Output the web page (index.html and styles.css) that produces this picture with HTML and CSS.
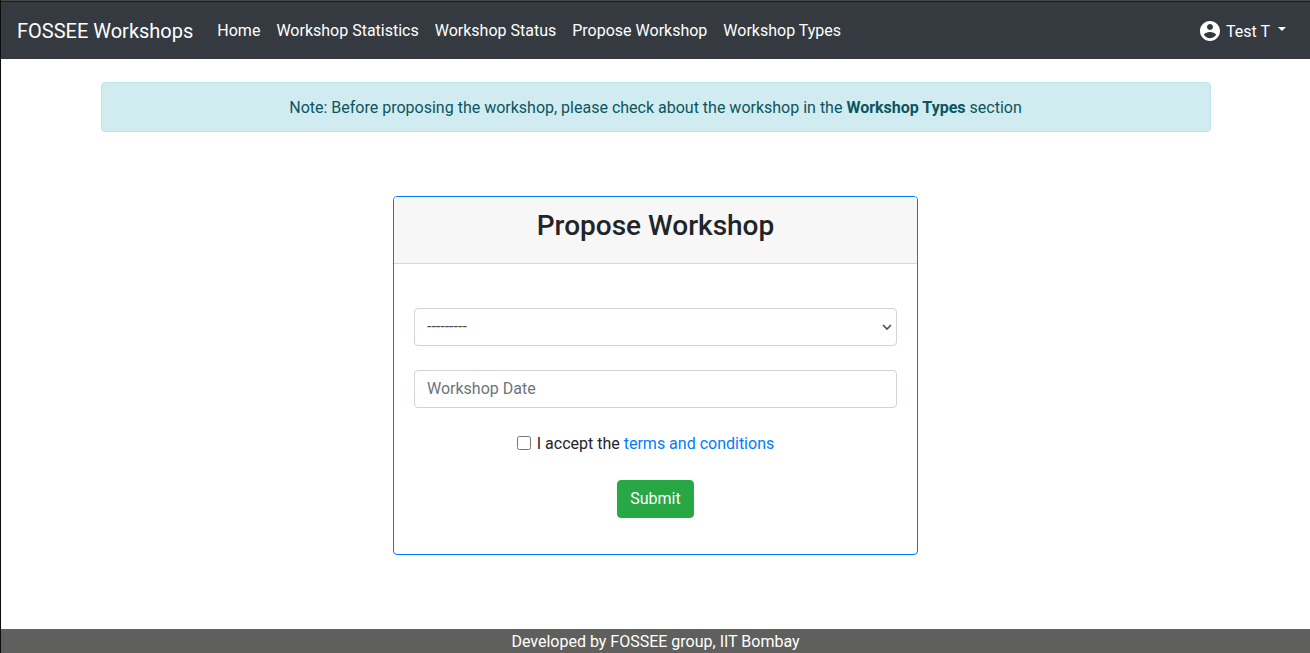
FILE: index.html
```html
<!DOCTYPE html>
<html lang="en">
<head>
<meta charset="utf-8">
<title>Propose Workshop</title>
<link rel="stylesheet" href="styles.css">
</head>
<body>
<header class="navbar">
  <a class="brand" href="#">FOSSEE Workshops</a>
  <nav class="nav-links">
    <a href="#">Home</a>
    <a href="#">Workshop Statistics</a>
    <a href="#">Workshop Status</a>
    <a href="#">Propose Workshop</a>
    <a href="#">Workshop Types</a>
  </nav>
  <button class="user-menu" type="button">
    <svg class="user-icon" viewBox="0 0 24 24" aria-hidden="true"><path fill="currentColor" d="M12 2C6.480 2 2 6.480 2 12s4.480 10 10 10 10-4.480 10-10S17.520 2 12 2zm0 3c1.660 0 3 1.340 3 3s-1.340 3-3 3-3-1.340-3-3 1.340-3 3-3zm0 14.200c-2.500 0-4.710-1.280-6-3.220.030-1.990 4-3.080 6-3.080 1.990 0 5.970 1.090 6 3.080-1.290 1.940-3.500 3.220-6 3.220z"/></svg>
    <span class="user-name">Test T</span>
    <span class="caret"></span>
  </button>
</header>
<main class="content">
  <p class="note">Note: Before proposing the workshop, please check about the workshop in the <b>Workshop Types</b> section</p>
  <section class="card">
    <div class="card-header"><h1>Propose Workshop</h1></div>
    <form class="card-body">
      <div class="select-wrap">
        <select class="field" aria-label="Workshop type"><option>---------</option></select>
        <svg class="chevron" viewBox="0 0 10 8" aria-hidden="true"><path d="M1 2 5 6 9 2" fill="none" stroke="currentColor" stroke-width="1.600"/></svg>
      </div>
      <input class="field" type="text" placeholder="Workshop Date" aria-label="Workshop date">
      <div class="terms">
        <input type="checkbox" id="accept">
        <label for="accept">I accept the <a href="#">terms and conditions</a></label>
      </div>
      <button class="submit" type="submit">Submit</button>
    </form>
  </section>
</main>
<footer class="footer">Developed by FOSSEE group, IIT Bombay</footer>
</body>
</html>
```
FILE: styles.css
```css
* { box-sizing: border-box; }
body {
  margin: 0;
  min-height: 100vh;
  display: flex;
  flex-direction: column;
  border-left: 1px solid #0c0c0c;
  font-family: Roboto, sans-serif;
  font-size: 16px;
  line-height: 24px;
  color: #212529;
  background: #fff;
}
a { color: #007bff; text-decoration: none; }
.navbar {
  display: flex;
  align-items: center;
  padding: 10px 16px 8px;
  border-top: 1px solid #484a48;
  box-shadow: inset 0 1px #191b1b;
  background: #343a40;
}
.navbar a { color: #fff; }
.brand { margin-right: 16px; padding: 5px 0; font-size: 20px; line-height: 30px; }
.nav-links { display: flex; }
.nav-links a { padding: 8px; }
.user-menu {
  display: flex;
  align-items: center;
  margin-left: auto;
  padding: 7px 8px;
  border: 0;
  background: none;
  color: #fff;
  font: inherit;
}
.user-icon { width: 24px; height: 24px; margin-right: 4px; }
.user-name { padding-top: 2px; }
.caret {
  margin: 0 0 4px 8px;
  border-top: 4px solid;
  border-right: 4px solid transparent;
  border-left: 4px solid transparent;
}
.content {
  flex: 1;
  width: 100%;
  max-width: 1140px;
  margin: 0 auto;
  padding: 23px 15px;
}
.note {
  margin: 0 0 64px;
  padding: 13px 20px 11px;
  border: 1px solid #bee5eb;
  border-radius: 4px;
  background: #d1ecf1;
  color: #0c5460;
  text-align: center;
}
.card {
  max-width: 525px;
  margin: 0 auto;
  border: 1px solid #007bff;
  border-radius: 4px;
}
.card-header {
  padding: 12px 20px;
  border-bottom: 1px solid #d8d8d8;
  border-radius: 3px 3px 0 0;
  background: #f7f7f7;
}
.card-header h1 {
  margin: 0 0 8px;
  font-size: 28px;
  line-height: 34px;
  font-weight: 500;
  text-align: center;
}
.card-body {
  display: flex;
  flex-direction: column;
  align-items: center;
  gap: 24px;
  padding: 44px 20px 36px;
}
.select-wrap { position: relative; width: 100%; }
.field {
  display: block;
  width: 100%;
  height: 38px;
  padding: 5px 12px 7px;
  border: 1px solid #ced4da;
  border-radius: 4px;
  background: #fff;
  color: #495057;
  font: inherit;
}
select.field { appearance: none; padding: 6px 12px; }
.chevron {
  position: absolute;
  top: 15px;
  right: 5px;
  width: 10px;
  height: 8px;
  color: #495057;
  pointer-events: none;
}
.field::placeholder { color: #6c757d; opacity: 1; }
.terms { display: flex; align-items: flex-start; padding-right: 20px; }
.terms input { width: 14px; height: 14px; margin: 4px 6px 0 0; }
.submit {
  padding: 6px 12px;
  border: 1px solid #28a745;
  border-radius: 4px;
  background: #28a745;
  color: #fff;
  font: inherit;
}
.footer { padding-top: 1px; line-height: 23px; background: #5f5f5d; color: #fff; text-align: center; }
```
